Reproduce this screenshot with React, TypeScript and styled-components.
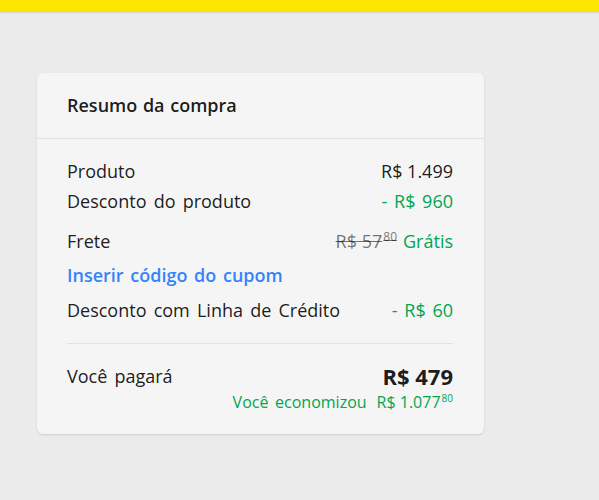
import React from "react";
import styled, { createGlobalStyle } from "styled-components";

const Global = createGlobalStyle`
  html, body { margin: 0; padding: 0; }
  body {
    background: #ebebeb;
    font-family: "Open Sans", "Liberation Sans", sans-serif;
    color: rgba(0,0,0,0.9);
  }
`;

const Page = styled.div`
  width: 599px;
  height: 500px;
  background: #ebebeb;
  display: flex;
  flex-direction: column;
`;

const TopBar = styled.div`
  height: 12px;
  background: #ffe600;
  box-shadow: 0 1px 1px rgba(0,0,0,0.08);
`;

const Content = styled.div`
  padding: 61px 0 0 37px;
`;

const Card = styled.div`
  width: 447px;
  background: #f5f5f5;
  border-radius: 6px;
  box-shadow: 0 1px 2px rgba(0,0,0,0.12);
`;

const Header = styled.div`
  padding: 20px 30px 21px;
  border-bottom: 1px solid #e2e2e2;
  font-size: 18px;
  font-weight: 600;
  line-height: 24px;
  word-spacing: 1px;
`;

const Body = styled.div`
  padding: 20px 31px 23px 30px;
  display: flex;
  flex-direction: column;
`;

const Row = styled.div<{ $mt?: number }>`
  display: flex;
  justify-content: space-between;
  align-items: center;
  font-size: 18px;
  line-height: 24px;
  margin-top: ${(p) => p.$mt ?? 0}px;
`;

const Label = styled.span`
  word-spacing: 2.5px;
`;

const Green = styled.span`
  color: #00a650;
`;

const Discount = styled(Green)`
  word-spacing: 2px;
`;

const Old = styled.s`
  color: rgba(0,0,0,0.55);
  margin-right: 6px;
`;

const Sup = styled.sup<{ $size?: number }>`
  font-size: ${(p) => p.$size ?? 12}px;
  vertical-align: top;
  position: relative;
  top: -4px;
  margin-left: 1px;
`;

const Link = styled.a`
  color: #3483fa;
  font-size: 18px;
  font-weight: 600;
  line-height: 24px;
  margin-top: 10px;
  text-decoration: none;
  word-spacing: 2px;
`;

const Divider = styled.hr`
  border: none;
  border-top: 1px solid #e2e2e2;
  margin: 21px 0 0;
  width: 100%;
`;

const Total = styled.div`
  display: flex;
  justify-content: space-between;
  align-items: center;
  margin-top: 20px;
  font-size: 18px;
  line-height: 24px;
`;

const TotalValue = styled.span`
  font-size: 22px;
  font-weight: 700;
`;

const Savings = styled.div`
  display: flex;
  justify-content: flex-end;
  gap: 10px;
  margin-top: 5px;
  color: #00a650;
  font-size: 16px;
  line-height: 18px;
`;

export default function App() {
  return (
    <Page>
      <Global />
      <TopBar />
      <Content>
        <Card>
          <Header>Resumo da compra</Header>
          <Body>
            <Row>
              <Label>Produto</Label>
              <span>R$ 1.499</span>
            </Row>
            <Row $mt={6}>
              <Label>Desconto do produto</Label>
              <Discount>- R$ 960</Discount>
            </Row>
            <Row $mt={16}>
              <Label>Frete</Label>
              <span>
                <Old>
                  R$ 57<Sup>80</Sup>
                </Old>
                <Green>Grátis</Green>
              </span>
            </Row>
            <Link href="#">Inserir código do cupom</Link>
            <Row $mt={11}>
              <Label>Desconto com Linha de Crédito</Label>
              <Discount>- R$ 60</Discount>
            </Row>
            <Divider />
            <Total>
              <Label>Você pagará</Label>
              <TotalValue>R$ 479</TotalValue>
            </Total>
            <Savings>
              <Label>Você economizou</Label>
              <span>
                R$ 1.077<Sup $size={10}>80</Sup>
              </span>
            </Savings>
          </Body>
        </Card>
      </Content>
    </Page>
  );
}
